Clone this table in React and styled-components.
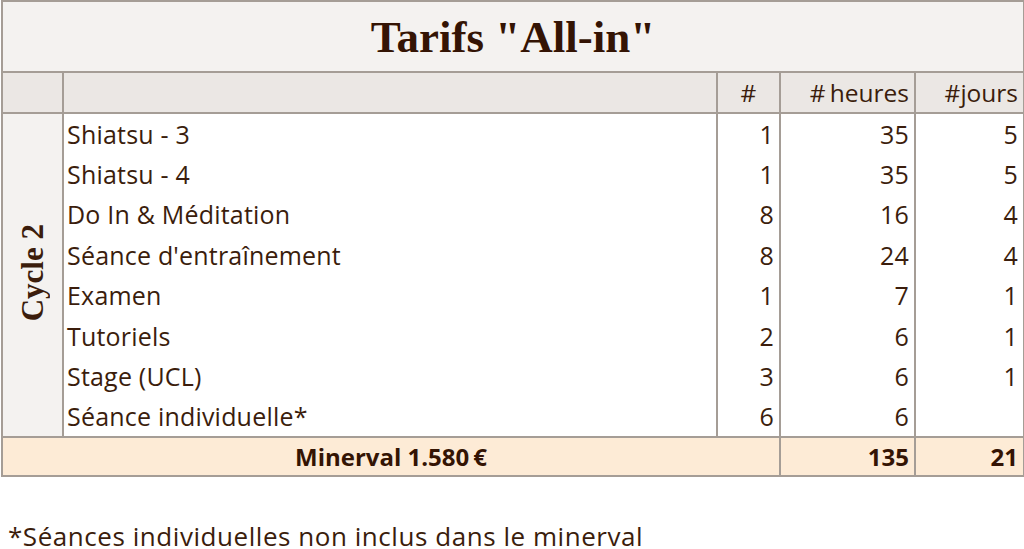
import React from "react";
import styled, { createGlobalStyle } from "styled-components";

const rows = [
  { label: "Shiatsu - 3", n: 1, h: 35, d: 5 },
  { label: "Shiatsu - 4", n: 1, h: 35, d: 5 },
  { label: "Do In & Méditation", n: 8, h: 16, d: 4 },
  { label: "Séance d'entraînement", n: 8, h: 24, d: 4 },
  { label: "Examen", n: 1, h: 7, d: 1 },
  { label: "Tutoriels", n: 2, h: 6, d: 1 },
  { label: "Stage (UCL)", n: 3, h: 6, d: 1 },
  { label: "Séance individuelle*", n: 6, h: 6, d: "" },
];

export default function App() {
  return (
    <>
      <GlobalStyle />
      <Table>
        <colgroup>
          <col style={{ width: 61 }} />
          <col style={{ width: 654 }} />
          <col style={{ width: 63 }} />
          <col style={{ width: 135 }} />
          <col style={{ width: 109 }} />
        </colgroup>
        <thead>
          <tr>
            <TitleCell colSpan={5}>Tarifs "All-in"</TitleCell>
          </tr>
          <tr>
            <HeadCell />
            <HeadCell />
            <HeadCell $align="center">#</HeadCell>
            <HeadCell>#&thinsp;heures</HeadCell>
            <HeadCell>#jours</HeadCell>
          </tr>
        </thead>
        <tbody>
          {rows.map((r, i) => (
            <tr key={r.label}>
              {i === 0 && (
                <SideCell rowSpan={rows.length}>
                  <Vertical>Cycle 2</Vertical>
                </SideCell>
              )}
              <Cell $align="left">{r.label}</Cell>
              <Cell>{r.n}</Cell>
              <Cell>{r.h}</Cell>
              <Cell>{r.d}</Cell>
            </tr>
          ))}
        </tbody>
        <tfoot>
          <tr>
            <FootCell colSpan={3} $align="center">
              Minerval 1.580&thinsp;€
            </FootCell>
            <FootCell>135</FootCell>
            <FootCell>21</FootCell>
          </tr>
        </tfoot>
      </Table>
      <Note>*Séances individuelles non inclus dans le minerval</Note>
    </>
  );
}

const GlobalStyle = createGlobalStyle`
  body {
    margin: 0;
    background: #fff;
    color: #3b1d0c;
    font-family: "Open Sans", Lato, sans-serif;
  }
`;

const Table = styled.table`
  width: 1022px;
  margin-left: 1px;
  border-collapse: collapse;
  table-layout: fixed;

  td, th {
    border: 2px solid #a59d96;
    box-sizing: border-box;
  }
`;

const TitleCell = styled.th`
  height: 71px;
  padding: 0;
  background: #f4f2f0;
  font-family: "Liberation Serif", serif;
  font-weight: 700;
  font-size: 45px;
  color: #341404;
  text-align: center;
`;

const HeadCell = styled.th`
  height: 41px;
  padding: 0 5px;
  background: #ebe7e4;
  font-weight: 400;
  font-size: 24.5px;
  text-align: ${(p) => p.$align || "right"};
  color: #3b1d0c;
`;

const SideCell = styled.td`
  background: #f4f2f0;
  padding: 0;
  text-align: center;
`;

const Vertical = styled.span`
  display: inline-block;
  writing-mode: vertical-rl;
  transform: rotate(180deg);
  font-family: "Liberation Serif", serif;
  font-weight: 700;
  font-size: 31px;
  color: #3b1d0c;
`;

const Cell = styled.td`
  height: 40.5px;
  padding: 0 5px 0 ${(p) => (p.$align === "left" ? "3px" : "5px")};
  border-top: none !important;
  border-bottom: none !important;
  background: #fff;
  font-size: 25px;
  letter-spacing: 0.2px;
  text-align: ${(p) => p.$align || "right"};
`;

const FootCell = styled.td`
  height: 39px;
  padding: 0 5px;
  background: #fdebd6;
  font-weight: 700;
  font-size: 24px;
  text-align: ${(p) => p.$align || "right"};
  color: #341404;
`;

const Note = styled.p`
  margin: 45px 0 0 8px;
  font-size: 26px;
  line-height: 28px;
  letter-spacing: 0.55px;
  white-space: nowrap;
  color: #3b1d0c;
`;
